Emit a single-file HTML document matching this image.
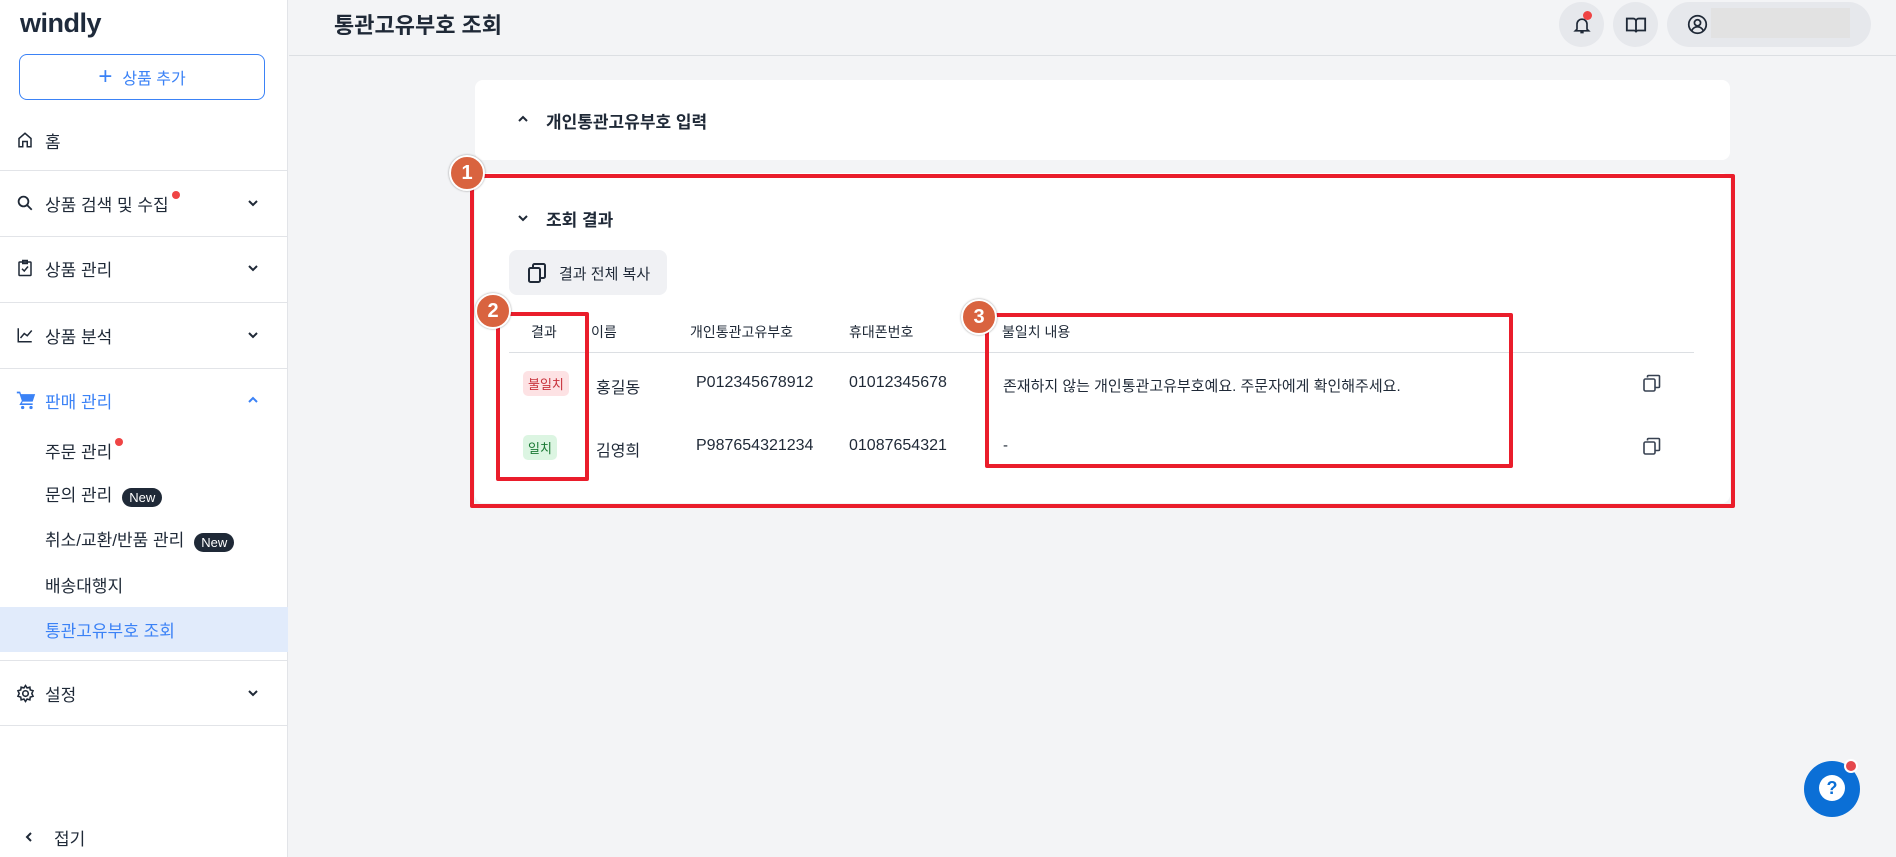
<!DOCTYPE html>
<html><head><meta charset="utf-8"><style>
*{box-sizing:border-box;margin:0;padding:0}
body{width:1896px;height:857px;overflow:hidden;background:#f3f4f6;font-family:"Liberation Sans","Noto Sans CJK KR",sans-serif;color:#1f2937;position:relative}
.abs{position:absolute}
.side{left:0;top:0;width:288px;height:857px;background:#fff;border-right:1px solid #e2e4e8}
.logo{left:20px;top:8px;font-size:27px;font-weight:bold;color:#1e2a3b;letter-spacing:-0.5px}
.addbtn{left:19px;top:54px;width:246px;height:46px;border:1.5px solid #3b82f6;border-radius:8px;color:#3b82f6;font-size:16px;display:flex;align-items:center;justify-content:center;gap:10px}
.mi{left:0;width:288px;font-size:17px;display:flex;align-items:center;height:30px;margin-top:-15px}
.mi svg{position:absolute;left:16px}
.mi .t{position:absolute;left:45px}
.sub .t{left:45px}
.chev{position:absolute;left:246px}
.hr{left:0;width:288px;height:1px;background:#e2e4e8}
.dot{display:inline-block;width:8px;height:8px;border-radius:50%;background:#ef4444;vertical-align:top;margin-left:3px}
.new{display:inline-block;background:#1f2937;color:#fff;font-size:13px;border-radius:10px;padding:2px 7px;margin-left:10px;vertical-align:middle}
.hdr{left:289px;top:0;width:1607px;height:56px;border-bottom:1px solid #dcdfe3}
.circ{border-radius:50%;background:#e6e8ec;width:45px;height:45px;top:2px;display:flex;align-items:center;justify-content:center}
.card{background:#fff;border-radius:8px}
.th{font-size:14px;color:#1f2937;top:322px}
.td{font-size:16px;color:#1f2937}
.red{border:4px solid #ea1d2b;border-radius:2px}
.mk{width:36px;height:36px;border-radius:50%;background:#d9633f;border:2px solid #fff;box-shadow:0 0 2px rgba(0,0,0,.4);color:#fff;font-weight:bold;font-size:20px;display:flex;align-items:center;justify-content:center}
</style></head><body>
<div class="abs side"></div>
<div class="abs logo">windly</div>
<div class="abs addbtn"><span style="font-size:24px;font-weight:300">+</span><span>상품 추가</span></div>

<div class="abs mi" style="top:140px"><svg width="18" height="18" viewBox="0 0 24 24" fill="none" stroke="#1f2937" stroke-width="2"><path d="M4 21V10l8-7 8 7v11h-5v-7H9v7z"/></svg><span class="t">홈</span></div>
<div class="abs hr" style="top:170px"></div>
<div class="abs mi" style="top:203px"><svg width="18" height="18" viewBox="0 0 24 24" fill="none" stroke="#1f2937" stroke-width="2.4"><circle cx="10" cy="10" r="6.5"/><path d="M15 15l6 6"/></svg><span class="t">상품 검색 및 수집<span class="dot"></span></span><svg class="chev" style="left:246px" width="14" height="14" viewBox="0 0 14 14" fill="none" stroke="#1f2937" stroke-width="2"><path d="M3 5l4 4 4-4"/></svg></div>
<div class="abs hr" style="top:236px"></div>
<div class="abs mi" style="top:268px"><svg width="18" height="18" viewBox="0 0 24 24" fill="none" stroke="#1f2937" stroke-width="2"><rect x="4" y="4" width="16" height="18" rx="1"/><path d="M9 2h6v4H9zM8 13l3 3 5-6"/></svg><span class="t">상품 관리</span><svg class="chev" style="left:246px" width="14" height="14" viewBox="0 0 14 14" fill="none" stroke="#1f2937" stroke-width="2"><path d="M3 5l4 4 4-4"/></svg></div>
<div class="abs hr" style="top:302px"></div>
<div class="abs mi" style="top:335px"><svg width="18" height="18" viewBox="0 0 24 24" fill="none" stroke="#1f2937" stroke-width="2"><path d="M3 3v18h18M6 16l5-6 4 3 6-7"/></svg><span class="t">상품 분석</span><svg class="chev" style="left:246px" width="14" height="14" viewBox="0 0 14 14" fill="none" stroke="#1f2937" stroke-width="2"><path d="M3 5l4 4 4-4"/></svg></div>
<div class="abs hr" style="top:368px"></div>
<div class="abs mi" style="top:400px;color:#3b82f6"><svg width="20" height="20" viewBox="0 0 24 24" fill="#3b82f6"><path d="M1 2h4l1 3h17l-3 9H8l-1 2h13v2H4l3-5L4 4H1z"/><circle cx="8" cy="21" r="2"/><circle cx="18" cy="21" r="2"/></svg><span class="t">판매 관리</span><svg class="chev" style="left:246px" width="14" height="14" viewBox="0 0 14 14" fill="none" stroke="#3b82f6" stroke-width="2"><path d="M3 9l4-4 4 4"/></svg></div>
<div class="abs mi" style="top:450px"><span class="t">주문 관리<span class="dot"></span></span></div>
<div class="abs mi" style="top:494px"><span class="t">문의 관리<span class="new">New</span></span></div>
<div class="abs mi" style="top:539px"><span class="t">취소/교환/반품 관리<span class="new">New</span></span></div>
<div class="abs mi" style="top:584px"><span class="t">배송대행지</span></div>
<div class="abs" style="left:0;top:607px;width:288px;height:45px;background:#e1ebfb"></div>
<div class="abs mi" style="top:629px;color:#3b82f6"><span class="t">통관고유부호 조회</span></div>
<div class="abs hr" style="top:660px"></div>
<div class="abs mi" style="top:693px"><svg width="19" height="19" viewBox="0 0 24 24" fill="none" stroke="#1f2937" stroke-width="2"><circle cx="12" cy="12" r="3.5"/><path d="M12 2l2 3 3.5-1 .5 3.5 3.5 1-1.5 3.5 1.5 3.5-3.5 1-.5 3.5-3.5-1-2 3-2-3-3.5 1-.5-3.5-3.5-1L4 12 2.5 8.5l3.5-1L6.5 4 10 5z"/></svg><span class="t">설정</span><svg class="chev" style="left:246px" width="14" height="14" viewBox="0 0 14 14" fill="none" stroke="#1f2937" stroke-width="2"><path d="M3 5l4 4 4-4"/></svg></div>
<div class="abs hr" style="top:725px"></div>
<div class="abs mi" style="top:837px"><svg style="left:22px" width="14" height="14" viewBox="0 0 14 14" fill="none" stroke="#1f2937" stroke-width="2"><path d="M9 3L5 7l4 4"/></svg><span class="t" style="left:54px">접기</span></div>

<div class="abs hdr"></div>
<div class="abs" style="left:334px;top:8px;font-size:22px;font-weight:bold;color:#1f2937">통관고유부호 조회</div>
<div class="abs circ" style="left:1559px"><svg width="20" height="20" viewBox="0 0 24 24" fill="none" stroke="#1f2937" stroke-width="2"><path d="M6 17V11a6 6 0 0112 0v6l2 2H4zM10 21h4"/></svg><span class="abs" style="left:24px;top:9px;width:9px;height:9px;border-radius:50%;background:#ef4444"></span></div>
<div class="abs circ" style="left:1613px"><svg width="22" height="22" viewBox="0 0 24 24" fill="none" stroke="#1f2937" stroke-width="2"><path d="M2 5h7a3 3 0 013 3v12a2 2 0 00-2-2H2zM22 5h-7a3 3 0 00-3 3v12a2 2 0 012-2h8z"/></svg></div>
<div class="abs" style="left:1667px;top:2px;width:204px;height:45px;border-radius:23px;background:#e6e8ec"><svg class="abs" style="left:20px;top:12px" width="21" height="21" viewBox="0 0 24 24" fill="none" stroke="#1f2937" stroke-width="2"><circle cx="12" cy="12" r="10"/><circle cx="12" cy="10" r="3.5"/><path d="M5.5 19a7 7 0 0113 0"/></svg><div class="abs" style="left:44px;top:6px;width:139px;height:30px;background:#e2e2e2"></div></div>

<div class="abs card" style="left:475px;top:80px;width:1255px;height:80px"></div>
<svg class="abs" style="left:516px;top:112px" width="14" height="14" viewBox="0 0 14 14" fill="none" stroke="#1f2937" stroke-width="2"><path d="M3 9l4-4 4 4"/></svg>
<div class="abs" style="left:546px;top:108px;font-size:17px;font-weight:bold">개인통관고유부호 입력</div>

<div class="abs card" style="left:475px;top:173px;width:1255px;height:330px"></div>
<svg class="abs" style="left:516px;top:211px" width="14" height="14" viewBox="0 0 14 14" fill="none" stroke="#1f2937" stroke-width="2"><path d="M3 5l4 4 4-4"/></svg>
<div class="abs" style="left:546px;top:206px;font-size:17px;font-weight:bold">조회 결과</div>
<div class="abs" style="left:509px;top:250px;width:158px;height:45px;border-radius:8px;background:#f0f1f4"></div>
<svg class="abs" style="left:527px;top:262px" width="20" height="22" viewBox="0 0 20 22" fill="none" stroke="#1f2937" stroke-width="2"><rect x="2" y="6" width="11" height="14" rx="1.5"/><path d="M6 5V3.5A1.5 1.5 0 017.5 2h9A1.5 1.5 0 0118 3.5v11a1.5 1.5 0 01-1.5 1.5H14"/></svg>
<div class="abs" style="left:559px;top:263px;font-size:15px">결과 전체 복사</div>

<div class="abs th" style="left:531px">결과</div>
<div class="abs th" style="left:591px">이름</div>
<div class="abs th" style="left:690px">개인통관고유부호</div>
<div class="abs th" style="left:849px">휴대폰번호</div>
<div class="abs th" style="left:1002px">불일치 내용</div>
<div class="abs" style="left:509px;top:352px;width:1185px;height:1px;background:#dcdfe3"></div>

<div class="abs" style="left:523px;top:371px;padding:3px 5px;border-radius:5px;background:#fde2e4;color:#c8323c;font-size:13px">불일치</div>
<div class="abs td" style="left:596px;top:374px">홍길동</div>
<div class="abs td" style="left:696px;top:374px">P012345678912</div>
<div class="abs td" style="left:849px;top:374px">01012345678</div>
<div class="abs" style="left:1003px;top:375px;font-size:15px">존재하지 않는 개인통관고유부호예요. 주문자에게 확인해주세요.</div>
<div class="abs" style="left:523px;top:435px;padding:3px 5px;border-radius:5px;background:#dcf5e2;color:#1b7a35;font-size:13px">일치</div>
<div class="abs td" style="left:596px;top:437px">김영희</div>
<div class="abs td" style="left:696px;top:437px">P987654321234</div>
<div class="abs td" style="left:849px;top:437px">01087654321</div>
<div class="abs" style="left:1003px;top:437px;font-size:15px">-</div>
<svg class="abs" style="left:1643px;top:374px" width="18" height="19" viewBox="0 0 18 19" fill="none" stroke="#374151" stroke-width="1.6"><rect x="1" y="5" width="11" height="12" rx="1.5"/><path d="M4.5 3.5V2.5a1 1 0 011-1h10a1 1 0 011 1v10a1 1 0 01-1 1h-3"/></svg>
<svg class="abs" style="left:1643px;top:437px" width="18" height="19" viewBox="0 0 18 19" fill="none" stroke="#374151" stroke-width="1.6"><rect x="1" y="5" width="11" height="12" rx="1.5"/><path d="M4.5 3.5V2.5a1 1 0 011-1h10a1 1 0 011 1v10a1 1 0 01-1 1h-3"/></svg>

<div class="abs red" style="left:470px;top:174px;width:1265px;height:334px"></div>
<div class="abs red" style="left:496px;top:312px;width:93px;height:169px"></div>
<div class="abs red" style="left:985px;top:313px;width:528px;height:155px"></div>
<div class="abs mk" style="left:449px;top:155px">1</div>
<div class="abs mk" style="left:475px;top:293px">2</div>
<div class="abs mk" style="left:961px;top:299px">3</div>

<div class="abs" style="left:1804px;top:761px;width:56px;height:56px;border-radius:50%;background:#0b6fd6"><div class="abs" style="left:15px;top:14px;width:26px;height:26px;border-radius:50%;background:#fff;color:#0b6fd6;font-weight:bold;font-size:18px;text-align:center;line-height:26px">?</div><div class="abs" style="left:40px;top:-2px;width:14px;height:14px;border-radius:50%;background:#e5484d;border:2px solid #fff"></div></div>
</body></html>
